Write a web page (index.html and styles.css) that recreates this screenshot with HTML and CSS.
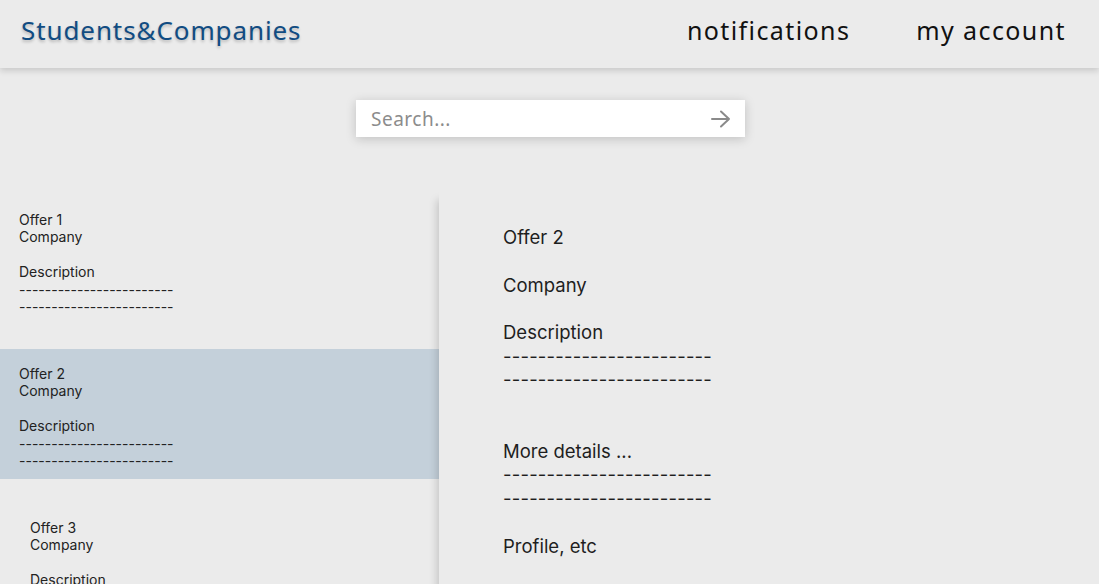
FILE: index.html
```html
<!DOCTYPE html>
<html>
<head>
<meta charset="utf-8">
<link rel="stylesheet" href="styles.css">
</head>
<body>
<header class="topbar">
  <div class="logo">Students&amp;Companies</div>
  <nav class="nav">
    <a class="nav-link">notifications</a>
    <a class="nav-link">my account</a>
  </nav>
</header>
<div class="search-row">
  <div class="search">
    <span class="search-ph">Search...</span>
    <svg class="search-arrow" width="20" height="18" viewBox="0 0 20 18"><path d="M1 9H18M10 1.5L18 9L10 16.5" fill="none" stroke="#8a8a8a" stroke-width="2" stroke-linecap="round" stroke-linejoin="round"/></svg>
  </div>
</div>
<main class="content">
  <section class="list">
    <div class="item">
      <div>Offer 1</div>
      <div>Company</div>
      <div>&nbsp;</div>
      <div>Description</div>
      <div class="dash">------------------------</div>
      <div class="dash">------------------------</div>
    </div>
    <div class="item selected">
      <div>Offer 2</div>
      <div>Company</div>
      <div>&nbsp;</div>
      <div>Description</div>
      <div class="dash">------------------------</div>
      <div class="dash">------------------------</div>
    </div>
    <div class="item indented">
      <div>Offer 3</div>
      <div>Company</div>
      <div>&nbsp;</div>
      <div>Description</div>
      <div class="dash">------------------------</div>
      <div class="dash">------------------------</div>
    </div>
  </section>
  <section class="detail">
    <p class="d-line">Offer 2</p>
    <p class="d-line">Company</p>
    <div class="d-block">
      <div>Description</div>
      <div class="dash">------------------------</div>
      <div class="dash">------------------------</div>
    </div>
    <div class="d-block more">
      <div>More details ...</div>
      <div class="dash">------------------------</div>
      <div class="dash">------------------------</div>
    </div>
    <p class="d-line">Profile, etc</p>
  </section>
</main>
</body>
</html>
```
FILE: styles.css
```css
html, body {
  margin: 0;
  padding: 0;
}
body {
  background: #ebebeb;
  font-family: "Inter", "Noto Sans", sans-serif;
  color: #1e1e1e;
  width: 1099px;
  height: 584px;
  overflow: hidden;
}
.topbar {
  height: 68px;
  background: #ebebeb;
  box-shadow: 0 3px 6px rgba(0,0,0,0.14);
  display: flex;
  align-items: center;
  justify-content: space-between;
  padding: 0 33px 0 21px;
  position: relative;
  z-index: 2;
}
.logo {
  font-family: "Noto Sans", sans-serif;
  font-size: 26px;
  color: #114c82;
  letter-spacing: 0.9px;
  text-shadow: 0 2px 3px rgba(0,0,0,0.22);
  padding-bottom: 8px;
}
.nav {
  display: flex;
  gap: 66px;
  padding-bottom: 8px;
}
.nav-link {
  font-family: "Noto Sans", sans-serif;
  font-size: 25px;
  color: #111;
  letter-spacing: 1.4px;
}
.search-row {
  display: flex;
  justify-content: center;
  padding-top: 32px;
  padding-left: 2px;
}
.search {
  width: 389px;
  height: 37px;
  background: #fff;
  box-shadow: 0 2px 10px rgba(0,0,0,0.18);
  display: flex;
  align-items: center;
  justify-content: space-between;
  padding: 0 14px 0 15px;
  box-sizing: border-box;
}
.search-ph {
  font-family: "Noto Sans", sans-serif;
  font-size: 19px;
  color: #8c8c8c;
  letter-spacing: 0.5px;
}
.search-arrow {
  display: block;
}
.content {
  display: flex;
  margin-top: 53px;
}
.list {
  width: 439px;
  flex: none;
  padding-top: 5px;
}
.item {
  font-size: 14px;
  line-height: 17.4px;
  padding: 16px 19px 9px;
  height: 130px;
  box-sizing: border-box;
  margin-bottom: 24px;
  color: #222;
}
.item.selected {
  background: #c4d0da;
}
.item.indented {
  padding-left: 30px;
}
.detail {
  flex: 1;
  height: 400px;
  box-shadow: -4px 8px 8px -2px rgba(0,0,0,0.17);
  background: #ebebeb;
  padding: 35px 0 0 64px;
  font-size: 18.5px;
  color: #1e1e1e;
  position: relative;
  z-index: 1;
}
.detail .dash {
  letter-spacing: 0.2px;
}
.d-line {
  margin: 0 0 24px;
  line-height: 24px;
}
.d-block {
  line-height: 23.5px;
  margin-bottom: 48px;
}
.d-block.more {
  margin-bottom: 24px;
}
```
